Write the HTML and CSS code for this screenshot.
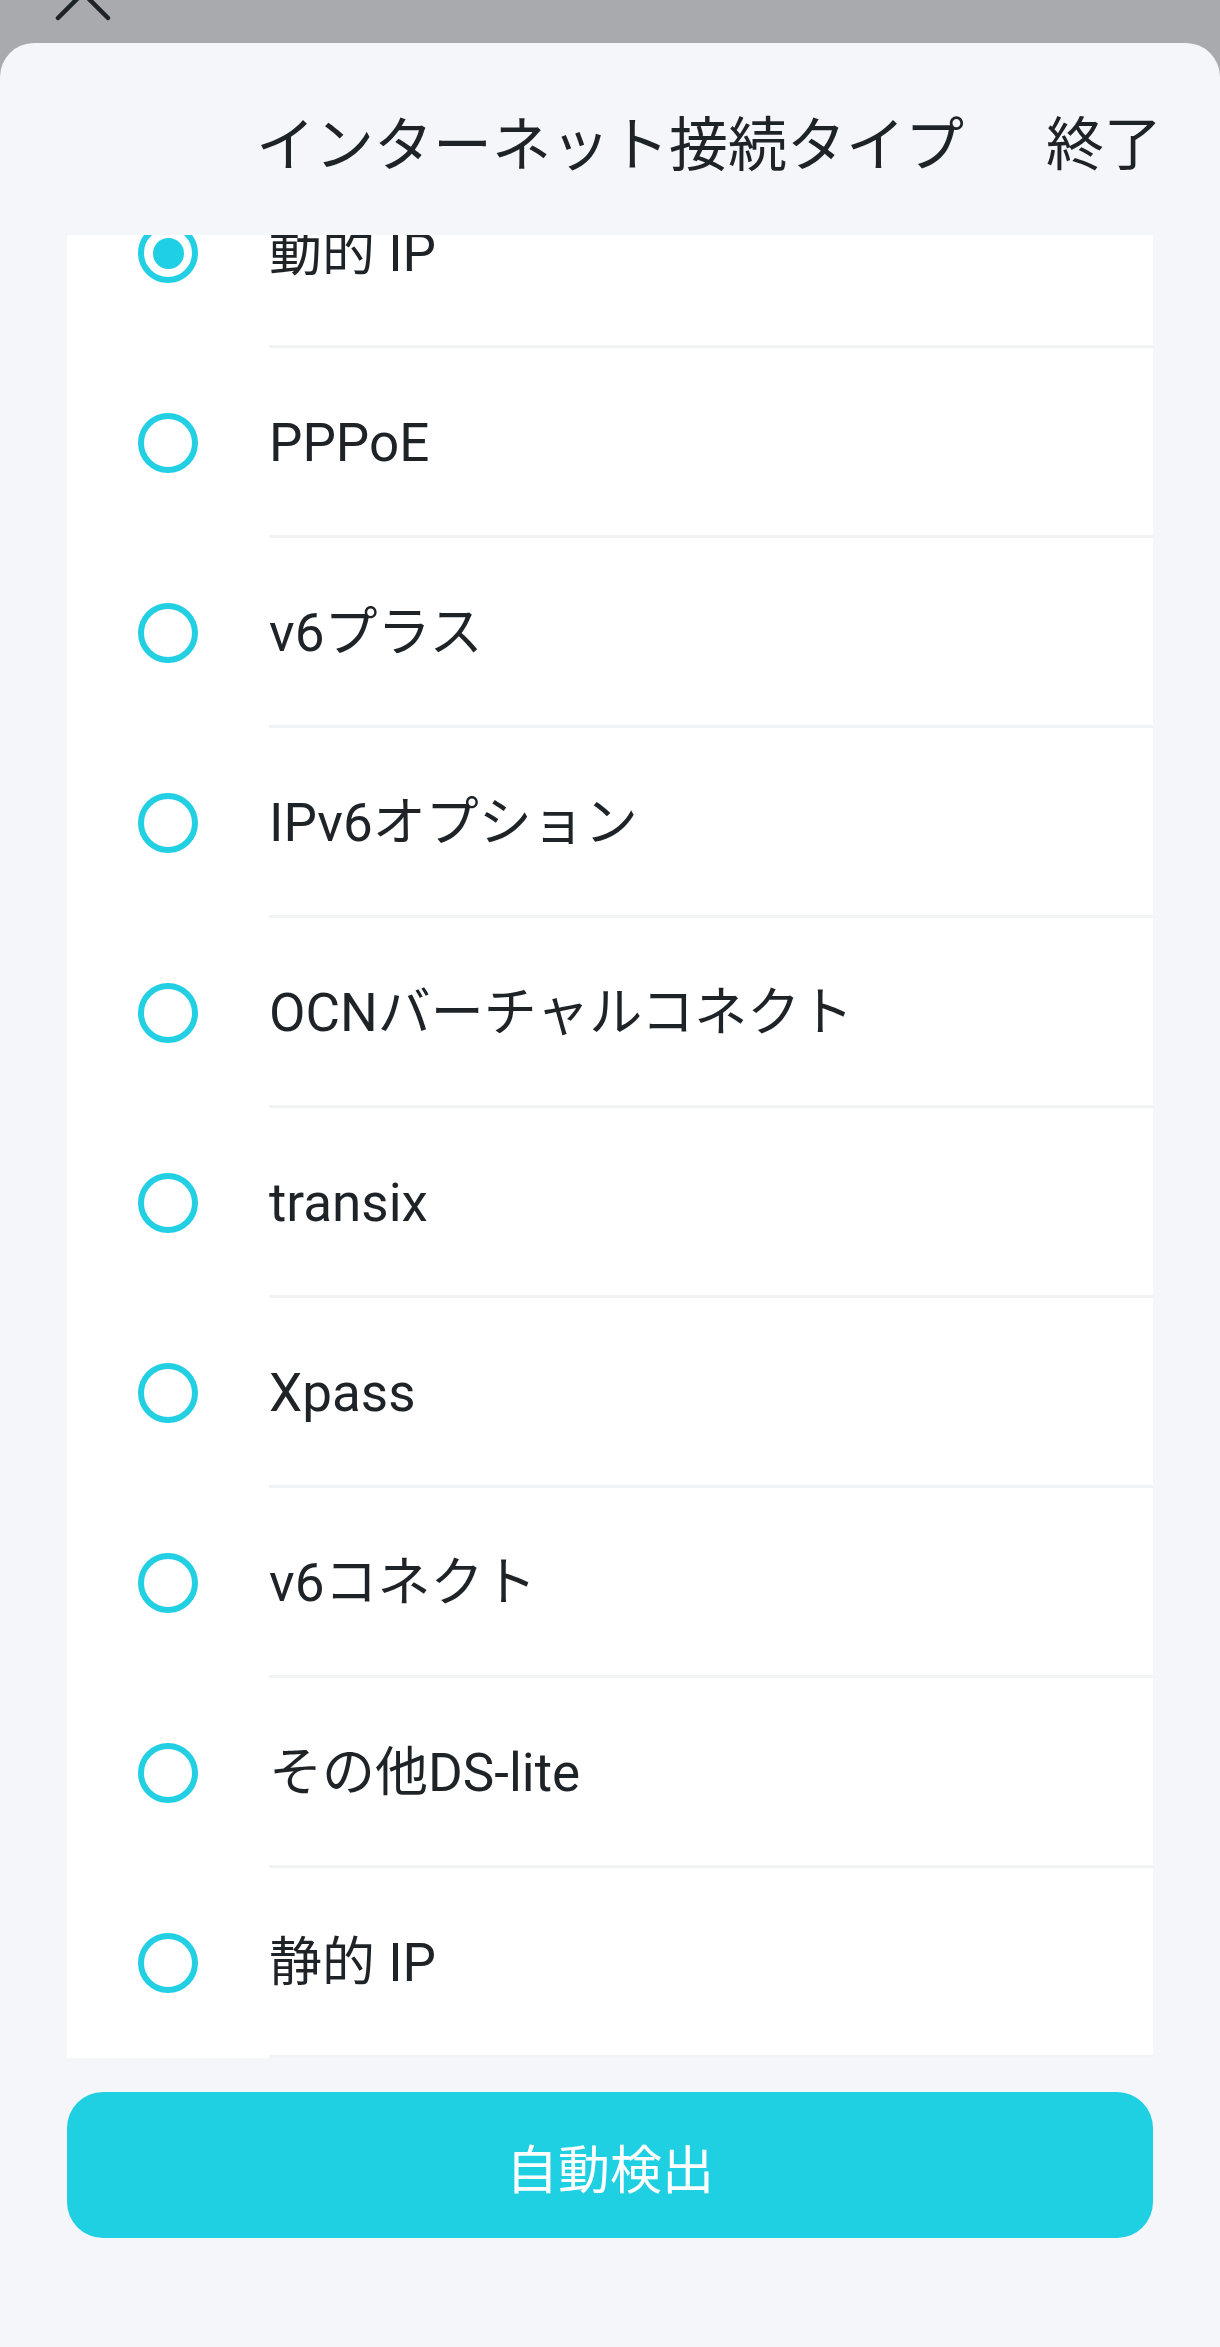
FILE: index.html
```html
<!DOCTYPE html>
<html lang="ja">
<head>
<meta charset="utf-8">
<title>インターネット接続タイプ</title>
<link rel="stylesheet" href="styles.css">
</head>
<body>
<div class="topbar">
  <svg class="close-icon" width="60" height="60" viewBox="0 0 60 60"><path d="M5 55 L55 5 M5 5 L55 55" stroke="#1e2327" stroke-width="4.5" stroke-linecap="round" fill="none"/></svg>
</div>
<div class="sheet">
  <div class="header">
    <div></div>
    <div class="title">インターネット接続タイプ</div>
    <div class="done">終了</div>
  </div>
  <div class="list-view">
    <ul class="list">
      <li class="row"><span class="radio checked"></span><span class="label">動的 IP</span></li>
      <li class="row"><span class="radio"></span><span class="label">PPPoE</span></li>
      <li class="row"><span class="radio"></span><span class="label">v6プラス</span></li>
      <li class="row"><span class="radio"></span><span class="label">IPv6オプション</span></li>
      <li class="row"><span class="radio"></span><span class="label">OCNバーチャルコネクト</span></li>
      <li class="row"><span class="radio"></span><span class="label">transix</span></li>
      <li class="row"><span class="radio"></span><span class="label">Xpass</span></li>
      <li class="row"><span class="radio"></span><span class="label">v6コネクト</span></li>
      <li class="row"><span class="radio"></span><span class="label">その他DS-lite</span></li>
      <li class="row"><span class="radio"></span><span class="label">静的 IP</span></li>
    </ul>
  </div>
  <button class="auto-btn">自動検出</button>
</div>
</body>
</html>
```

FILE: styles.css
```css
html, body {
  margin: 0;
  padding: 0;
}
body {
  background: #a9aaad;
  font-family: "Roboto", "Noto Sans CJK JP", sans-serif;
  color: #1e2327;
  width: 1220px;
  height: 2347px;
  overflow: hidden;
}
.topbar {
  height: 43px;
  overflow: hidden;
  display: flex;
  align-items: flex-start;
}
.close-icon {
  display: block;
  margin-top: -37px;
  margin-left: 53px;
}
.sheet {
  background: #f5f6fa;
  border-radius: 34px 34px 0 0;
  height: 2304px;
  display: flex;
  flex-direction: column;
}
.header {
  height: 192px;
  display: grid;
  grid-template-columns: 1fr auto 1fr;
  align-items: center;
  padding: 0 58px;
  font-family: "Noto Sans CJK JP", sans-serif;
  font-size: 58px;
  line-height: 1;
  color: #1e2327;
}
.title {
  font-size: 59px;
  padding-top: 2px;
}
.done {
  justify-self: end;
  padding-top: 2px;
}
.list-view {
  margin: 0 67px;
  background: #ffffff;
  overflow: hidden;
}
.list {
  list-style: none;
  margin: -77px 0 0 0;
  padding: 0 0 0 71px;
}
.row {
  height: 190px;
  display: flex;
  align-items: center;
}
.radio {
  flex: none;
  width: 60px;
  height: 60px;
  box-sizing: border-box;
  border: 6px solid #22cfe3;
  border-radius: 50%;
  margin-right: 71px;
  display: flex;
  align-items: center;
  justify-content: center;
}
.radio.checked::after {
  content: "";
  width: 31px;
  height: 31px;
  border-radius: 50%;
  background: #1fcfe3;
}
.label {
  flex: 1;
  align-self: stretch;
  display: flex;
  align-items: center;
  box-sizing: border-box;
  border-bottom: 3px solid #f2f3f5;
  padding-top: 3px;
  font-size: 53px;
  line-height: 1;
  color: #1e2327;
}
.auto-btn {
  margin: 34px 67px 0;
  height: 146px;
  border: none;
  border-radius: 36px;
  background: #1fd0e3;
  color: #ffffff;
  font-family: "Noto Sans CJK JP", sans-serif;
  font-size: 52px;
  line-height: 1;
  padding: 4px 0 0;
  cursor: pointer;
}
```
